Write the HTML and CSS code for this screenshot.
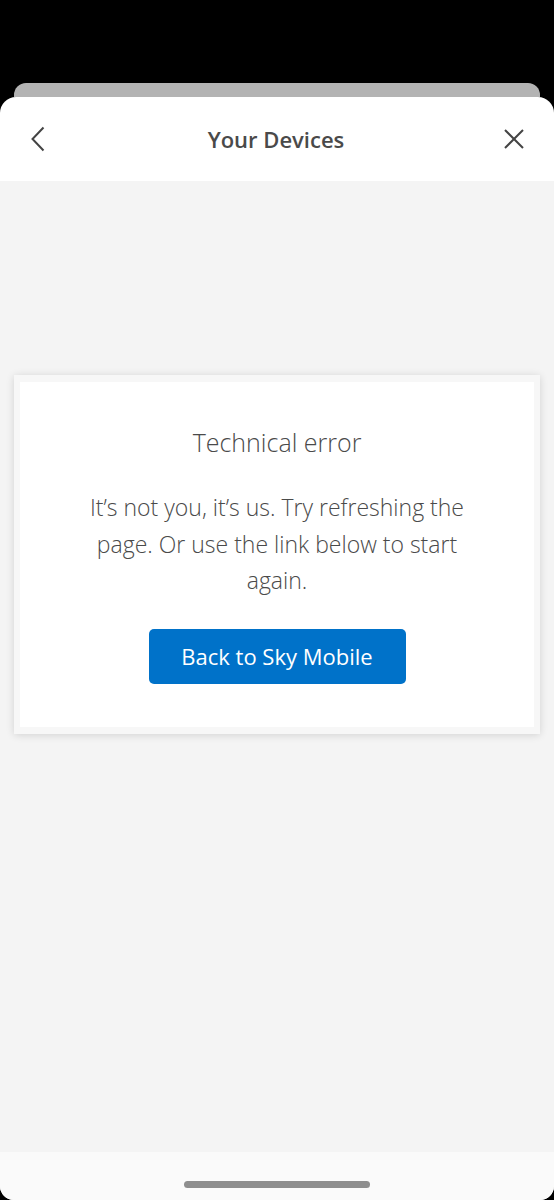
FILE: index.html
```html
<!DOCTYPE html>
<html lang="en">
<head>
  <meta charset="UTF-8">
  <meta name="viewport" content="width=device-width, initial-scale=1">
  <title>Your Devices</title>
  <link rel="stylesheet" href="styles.css">
</head>
<body>
  <div class="status"></div>
  <div class="sheet-back"></div>
  <div class="sheet">
    <header class="header">
      <button class="icon-btn" aria-label="Back">
        <svg width="16" height="26" viewBox="0 0 16 26"><path d="M13.5 1.5 L2.5 13 L13.5 24.5" fill="none" stroke="#444" stroke-width="2"/></svg>
      </button>
      <h1>Your Devices</h1>
      <button class="icon-btn" aria-label="Close">
        <svg width="22" height="22" viewBox="0 0 22 22"><path d="M2 2 L20 20 M20 2 L2 20" fill="none" stroke="#444" stroke-width="2"/></svg>
      </button>
    </header>
    <main class="content">
      <div class="card">
        <div class="card-inner">
          <h2>Technical error</h2>
          <p>It’s not you, it’s us. Try refreshing the page. Or use the link below to start again.</p>
          <a href="#" class="btn">Back to Sky Mobile</a>
        </div>
      </div>
    </main>
    <div class="home-bar"><span class="indicator"></span></div>
  </div>
</body>
</html>
```

FILE: styles.css
```css
body {
  margin: 0;
  background: #000;
  font-family: 'Open Sans', sans-serif;
  color: #4a4a4a;
  height: 1200px;
  display: flex;
  flex-direction: column;
}
.status {
  height: 83px;
}
.sheet-back {
  height: 14px;
  margin: 0 14px;
  background: #b3b3b3;
  border-radius: 12px 12px 0 0;
}
.sheet {
  flex: 1;
  display: flex;
  flex-direction: column;
  background: #fff;
  border-radius: 16px 16px 14px 14px;
  overflow: hidden;
}
.header {
  height: 84px;
  display: flex;
  align-items: center;
  justify-content: space-between;
  padding: 0 28px 0 26px;
}
.header h1 {
  margin: 0;
  font-size: 22px;
  font-weight: 600;
  color: #4a4a4a;
}
.icon-btn {
  background: none;
  border: none;
  padding: 0;
  width: 24px;
  height: 26px;
  display: flex;
  align-items: center;
  justify-content: center;
}
.content {
  flex: 1;
  background: #f4f4f4;
  padding: 194px 14px 0;
}
.card {
  background: #f7f7f7;
  padding: 7px 6px;
  box-shadow: 0 1px 8px rgba(0, 0, 0, 0.14);
}
.card-inner {
  background: #fff;
  padding: 44px 30px 43px;
  text-align: center;
}
.card-inner h2 {
  margin: 0 0 31px;
  font-size: 25px;
  line-height: 32px;
  font-weight: 300;
}
.card-inner p {
  max-width: 410px;
  margin: 0 auto 30px;
  font-size: 23px;
  line-height: 36.5px;
  font-weight: 300;
}
.btn {
  display: inline-block;
  width: 257px;
  height: 55px;
  line-height: 55px;
  background: #0072c9;
  color: #fff;
  border-radius: 5px;
  font-size: 22px;
  font-weight: 500;
  text-decoration: none;
}
.home-bar {
  height: 48px;
  background: #fafafa;
  display: flex;
  justify-content: center;
  padding-top: 29px;
  box-sizing: border-box;
}
.indicator {
  width: 186px;
  height: 7px;
  border-radius: 4px;
  background: #8e8e8e;
}
```
